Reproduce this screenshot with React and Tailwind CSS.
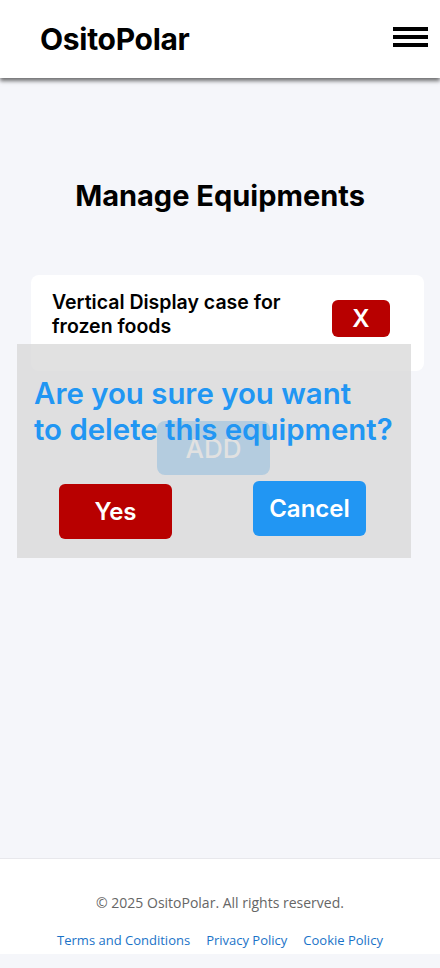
import React from "react";

export default function App() {
  return (
    <div className="min-h-[968px] bg-[#f5f6fa] flex flex-col font-['Inter',sans-serif] text-black">
      <header className="h-[78px] shrink-0 bg-white flex items-center justify-between pl-10 pr-3 relative z-10 shadow-[0_3px_4px_rgba(0,0,0,0.55)]">
        <span className="text-[30px] leading-[36px] font-bold tracking-[-0.3px]">OsitoPolar</span>
        <div className="w-[35px] flex flex-col gap-1 mt-[-4px]">
          <span className="block h-1 bg-black" />
          <span className="block h-1 bg-black" />
          <span className="block h-1 bg-black" />
        </div>
      </header>

      <main className="flex-1 relative flex flex-col">
        <h1 className="mt-[100px] text-center text-[29px] leading-[36px] font-bold">Manage Equipments</h1>

        <div className="mt-[61px] ml-[31px] w-[393px] h-[96px] bg-white rounded-lg flex items-start justify-between pl-[21px] pr-[34px] pt-[15px]">
          <p className="text-[19.5px] leading-[24px] font-semibold w-[250px]">
            Vertical Display case for frozen foods
          </p>
          <button className="mt-[10px] w-[58px] h-[37px] rounded-md bg-[#b80000] text-white text-[24px] leading-none font-semibold flex items-center justify-center">
            X
          </button>
        </div>

        <button className="mt-[50px] ml-[157px] w-[113px] h-[54px] rounded-lg bg-[#2196f3] text-white text-[26px] font-medium">
          ADD
        </button>

        <div className="absolute left-[17px] top-[266px] w-[394px] h-[214px] bg-[rgba(218,218,218,0.8)] pl-[17px] pt-[32px]">
          <p className="text-[#2196f3] text-[29.4px] leading-[36px] font-semibold">
            Are you sure you want
            <br />
            to delete this equipment?
          </p>
          <div className="flex items-start mt-[33px] pl-[25px] gap-[81px]">
            <button className="mt-[3px] w-[113px] h-[55px] rounded-md bg-[#b80000] text-white text-[24px] font-semibold">
              Yes
            </button>
            <button className="w-[113px] h-[55px] rounded-md bg-[#2196f3] text-white text-[24px] font-semibold">
              Cancel
            </button>
          </div>
        </div>
      </main>

      <footer className="h-[96px] shrink-0 mb-[14px] bg-white border-t border-[#e8e8ec] flex flex-col items-center font-['Open_Sans',sans-serif]">
        <p className="mt-[34px] text-[14px] leading-[20px] text-[#666]">© 2025 OsitoPolar. All rights reserved.</p>
        <div className="mt-[18px] flex gap-4 text-[13px] leading-[18px] text-[#1a73c8]">
          <a>Terms and Conditions</a>
          <a>Privacy Policy</a>
          <a>Cookie Policy</a>
        </div>
      </footer>
    </div>
  );
}
